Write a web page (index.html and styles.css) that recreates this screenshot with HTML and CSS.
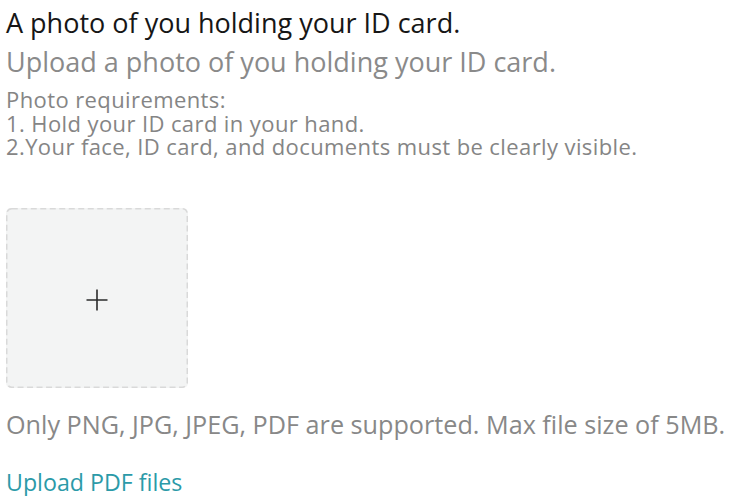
FILE: index.html
```html
<!DOCTYPE html>
<html lang="en">
<head>
<meta charset="utf-8">
<title>Upload ID photo</title>
<link rel="stylesheet" href="styles.css">
</head>
<body>
<main class="page">
  <h1 class="title">A photo of you holding your ID card.</h1>
  <p class="subtitle">Upload a photo of you holding your ID card.</p>
  <div class="requirements">
    <p>Photo requirements:</p>
    <p>1. Hold your ID card in your hand.</p>
    <p>2.Your face, ID card, and documents must be clearly visible.</p>
  </div>
  <div class="uploader">
    <svg class="frame" viewBox="0 0 182 180" aria-hidden="true">
      <rect x="0.75" y="0.75" width="180.5" height="178.5" rx="5" ry="5" fill="none" stroke="#d9d9d9" stroke-width="1.5" stroke-dasharray="6 3.5"/>
    </svg>
    <svg class="plus" width="22" height="22" viewBox="0 0 22 22" aria-hidden="true">
      <path d="M11 0.5V21.5M0.5 11H21.5" stroke="#2b2b2b" stroke-width="1.6" fill="none"/>
    </svg>
  </div>
  <p class="notice">Only PNG, JPG, JPEG, PDF are supported. Max file size of 5MB.</p>
  <a class="link" href="#">Upload PDF files</a>
</main>
</body>
</html>
```

FILE: styles.css
```css
html, body {
  margin: 0;
  padding: 0;
  background: #ffffff;
}

.page {
  display: flex;
  flex-direction: column;
  align-items: flex-start;
  padding: 7px 0 0 6px;
  font-family: "Open Sans", Roboto, sans-serif;
}

.title {
  margin: 0;
  font-size: 27px;
  font-weight: 400;
  line-height: 32px;
  color: #161616;
}

.subtitle {
  margin: 7px 0 0;
  font-size: 27px;
  line-height: 32px;
  color: #8a8a8a;
}

.requirements {
  margin-top: 10px;
  font-size: 22px;
  letter-spacing: 0.4px;
  line-height: 23.5px;
  color: #858585;
}

.requirements p {
  margin: 0;
}

.uploader {
  position: relative;
  margin-top: 49.5px;
  width: 182px;
  height: 180px;
  box-sizing: border-box;
  padding-top: 4px;
  border-radius: 5px;
  background: #f3f4f4;
  display: flex;
  align-items: center;
  justify-content: center;
}

.frame {
  position: absolute;
  inset: 0;
  width: 100%;
  height: 100%;
}

.notice {
  margin: 21px 0 0;
  font-size: 25.2px;
  line-height: 30px;
  color: #888888;
}

.link {
  margin-top: 29px;
  font-size: 23.2px;
  line-height: 28px;
  color: #2b9aa8;
  text-decoration: none;
}
```
